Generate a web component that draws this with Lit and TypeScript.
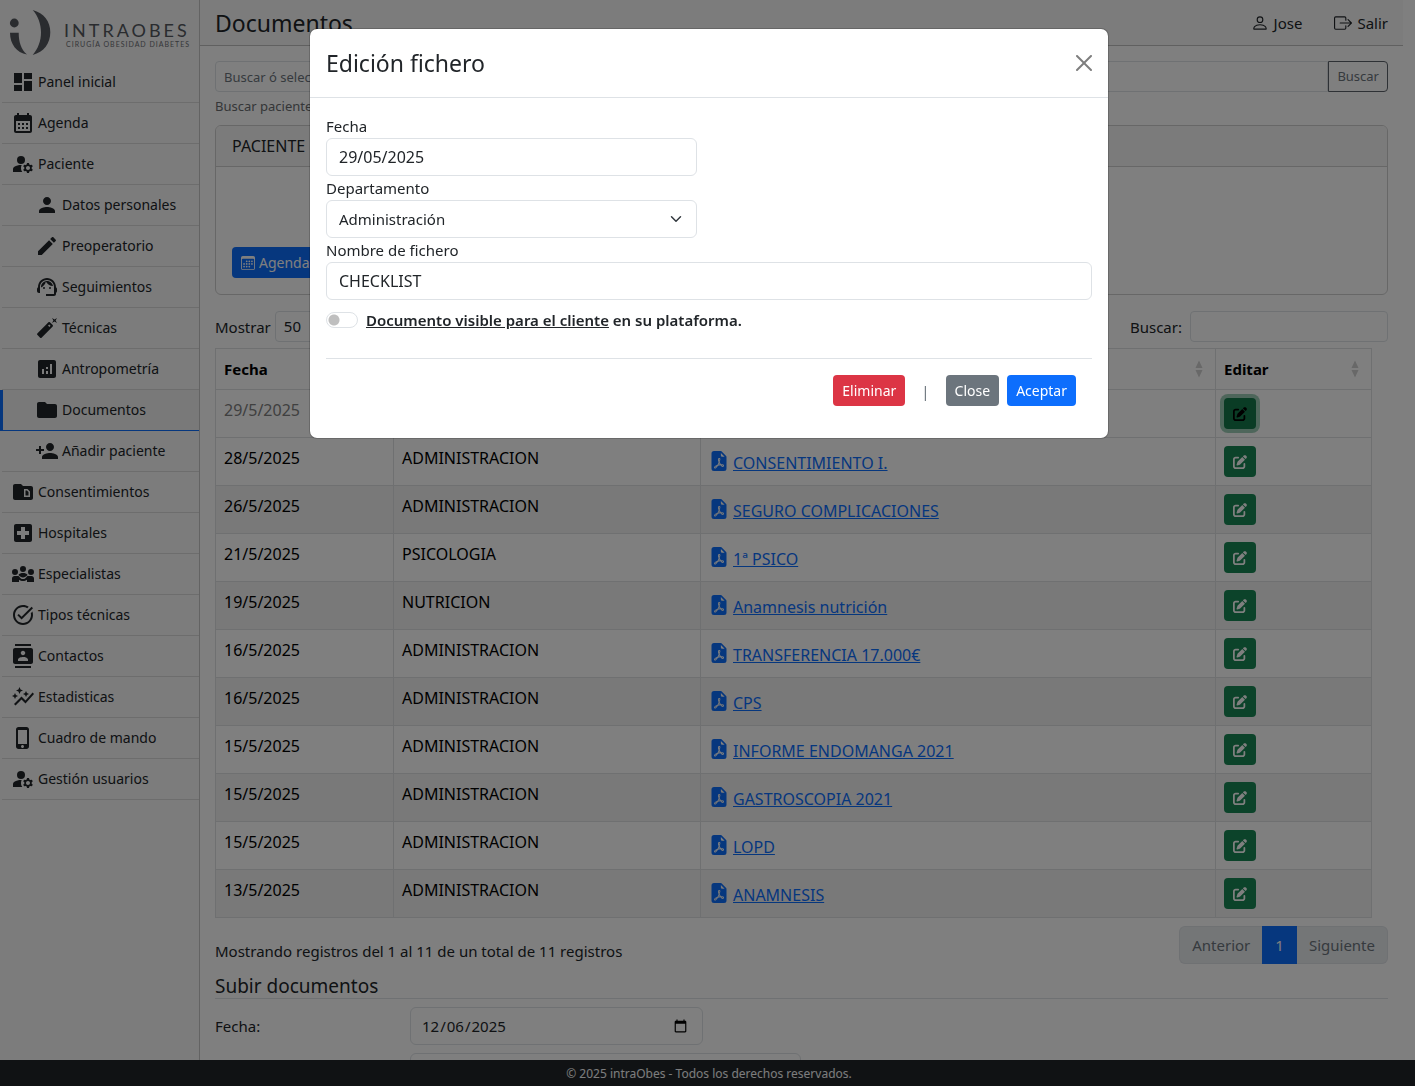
import { LitElement, html, css, svg, nothing } from "lit";
import { customElement } from "lit/decorators.js";
import { classMap } from "lit/directives/class-map.js";

const icons: Record<string, string[]> = {
  dashboard: ["M3 13h8V3H3v10zm0 8h8v-6H3v6zm10 0h8V11h-8v10zm0-18v6h8V3h-8z"],
  calendar: [
    "M19 4h-1V2h-2v2H8V2H6v2H5c-1.11 0-1.99.9-1.99 2L3 20c0 1.1.89 2 2 2h14c1.1 0 2-.9 2-2V6c0-1.1-.9-2-2-2zm0 16H5V10h14v10zM9 14H7v-2h2v2zm4 0h-2v-2h2v2zm4 0h-2v-2h2v2zm-8 4H7v-2h2v2zm4 0h-2v-2h2v2zm4 0h-2v-2h2v2z",
  ],
  manage: [
    "M14 8a4 4 0 1 1-8 0a4 4 0 0 1 8 0z",
    "M10.67 13.02C10.45 13.01 10.23 13 10 13c-2.42 0-4.68.67-6.61 1.82-.88.52-1.39 1.5-1.39 2.53V20h9.26c-.79-1.13-1.26-2.51-1.26-4 0-1.07.25-2.07.67-2.98zM20.75 16c0-.22-.03-.42-.06-.63l1.14-1.01-1-1.73-1.45.49c-.32-.27-.68-.48-1.08-.63L18 11h-2l-.3 1.49c-.4.15-.76.36-1.08.63l-1.45-.49-1 1.73 1.14 1.01c-.03.21-.06.41-.06.63s.03.42.06.63l-1.14 1.01 1 1.73 1.45-.49c.32.27.68.48 1.08.63L16 21h2l.3-1.49c.4-.15.76-.36 1.08-.63l1.45.49 1-1.73-1.14-1.01c.03-.21.06-.41.06-.63zM17 18c-1.1 0-2-.9-2-2s.9-2 2-2 2 .9 2 2-.9 2-2 2z",
  ],
  person: [
    "M12 12c2.21 0 4-1.79 4-4s-1.79-4-4-4-4 1.79-4 4 1.79 4 4 4zm0 2c-2.67 0-8 1.34-8 4v2h16v-2c0-2.66-5.33-4-8-4z",
  ],
  pencil: [
    "M3 17.25V21h3.75L17.81 9.94l-3.75-3.75L3 17.25zM20.71 7.04c.39-.39.39-1.02 0-1.41l-2.34-2.34c-.39-.39-1.02-.39-1.41 0l-1.83 1.83 3.75 3.75 1.83-1.83z",
  ],
  support: [
    "M21 12.22C21 6.73 16.74 3 12 3c-4.69 0-9 3.65-9 9.28-.6.34-1 .98-1 1.72v2c0 1.1.9 2 2 2h1v-6.1c0-3.87 3.13-7 7-7s7 3.13 7 7V19h-8v2h8c1.1 0 2-.9 2-2v-1.22c.59-.31 1-.92 1-1.64v-2.3c0-.7-.41-1.31-1-1.62z",
    "M10 13a1 1 0 1 1-2 0a1 1 0 0 1 2 0zM16 13a1 1 0 1 1-2 0a1 1 0 0 1 2 0z",
    "M18 11.03C17.52 8.18 15.04 6 12.05 6c-3.03 0-6.29 2.51-6.03 6.45 2.47-1.01 4.33-3.21 4.86-5.89 1.31 2.63 4 4.44 7.12 4.47z",
  ],
  wand: [
    "M22 2l-2.5 1.4L17 2l1.4 2.5L17 7l2.5-1.4L22 7l-1.4-2.5L22 2z",
    "M17.71 9.12l-2.83-2.83C14.68 6.1 14.43 6 14.17 6c-.26 0-.51.1-.71.29L2.29 17.46c-.39.39-.39 1.02 0 1.41l2.83 2.83c.2.2.46.3.71.3s.51-.1.71-.29l11.17-11.17c.39-.39.39-1.03 0-1.42zm-3.54-.7l1.41 1.41L14.41 11 13 9.59l1.17-1.17z",
  ],
  analytics: [
    "M19 3H5c-1.1 0-2 .9-2 2v14c0 1.1.9 2 2 2h14c1.1 0 2-.9 2-2V5c0-1.1-.9-2-2-2zM9 17H7v-5h2v5zm4 0h-2v-3h2v3zm0-5h-2v-2h2v2zm4 5h-2V7h2v10z",
  ],
  folder: [
    "M10 4H4c-1.1 0-1.99.9-1.99 2L2 18c0 1.1.9 2 2 2h16c1.1 0 2-.9 2-2V8c0-1.1-.9-2-2-2h-8l-2-2z",
  ],
  personAdd: [
    "M15 12c2.21 0 4-1.79 4-4s-1.79-4-4-4-4 1.79-4 4 1.79 4 4 4zm-9-2V7H4v3H1v2h3v3h2v-3h3v-2H6zm9 4c-2.67 0-8 1.34-8 4v2h16v-2c0-2.66-5.33-4-8-4z",
  ],
  snippetFolder: [
    "M15.88 10.5l1.62 1.62v3.38h-3v-5h1.38zM22 8v10c0 1.1-.9 2-2 2H4c-1.1 0-2-.9-2-2L2.01 6c0-1.1.89-2 1.99-2h6l2 2h8c1.1 0 2 .9 2 2zm-3 3.5L16.5 9H13v8h6v-5.5z",
  ],
  hospital: [
    "M19 3H5c-1.1 0-1.99.9-1.99 2L3 19c0 1.1.9 2 2 2h14c1.1 0 2-.9 2-2V5c0-1.1-.9-2-2-2zm-1 11h-4v4h-4v-4H6v-4h4V6h4v4h4v4z",
  ],
  groups: [
    "M15 7a3 3 0 1 1-6 0a3 3 0 0 1 6 0zM7 10a3 3 0 1 1-6 0a3 3 0 0 1 6 0zM23 10a3 3 0 1 1-6 0a3 3 0 0 1 6 0z",
    "M12 15.6c1.9 0 3-1.4 4.6-2.6C15.6 11.6 14 11 12 11s-3.6.6-4.6 2C9 14.2 10.1 15.6 12 15.6z",
    "M1 20v-3.5C1 15.1 2.1 14 3.5 14h3.2c1 0 1.5.6 2 1.2.9 1.2 2 1.9 3.3 1.9s2.4-.7 3.3-1.9c.5-.6 1-1.2 2-1.2h3.2c1.4 0 2.5 1.1 2.5 2.5V20h-7v-2.3c-1.1.9-2.5 1.4-4 1.4s-2.900-.5-4-1.4V20H1z",
  ],
  taskAlt: [
    "M22 5.18 10.59 16.6l-4.24-4.24 1.41-1.41 2.83 2.83 10-10L22 5.18zm-2.21 5.04c.13.57.21 1.17.21 1.78 0 4.42-3.58 8-8 8s-8-3.58-8-8 3.58-8 8-8c1.58 0 3.04.46 4.28 1.25l1.44-1.44C16.1 2.67 14.13 2 12 2 6.48 2 2 6.48 2 12s4.48 10 10 10 10-4.48 10-10c0-1.19-.22-2.33-.6-3.39l-1.61 1.61z",
  ],
  contacts: [
    "M20 0H4v2h16V0zM4 24h16v-2H4v2zM20 4H4c-1.1 0-2 .9-2 2v12c0 1.1.9 2 2 2h16c1.1 0 2-.9 2-2V6c0-1.1-.9-2-2-2zm-8 2.75c1.24 0 2.25 1.01 2.25 2.25s-1.01 2.25-2.25 2.25S9.75 10.24 9.75 9 10.76 6.75 12 6.75zM17 17H7v-1.5c0-1.67 3.33-2.5 5-2.5s5 .83 5 2.5V17z",
  ],
  autoGraph: [
    "M14.06 9.94L12 9l2.06-.94L15 6l.94 2.06L18 9l-2.06.94L15 12l-.94-2.06zM4 14l.94-2.06L7 11l-2.06-.94L4 8l-.94 2.06L1 11l2.06.94L4 14zm4.5-5l1.09-2.41L12 5.5 9.59 4.41 8.5 2 7.41 4.41 5 5.5l2.41 1.09L8.5 9zm-4 11.5l6-6.01 4 4L23 8.93l-1.41-1.41-7.09 7.97-4-4L3 19l1.5 1.5z",
  ],
  phone: [
    "M15.5 1h-8C6.12 1 5 2.12 5 3.5v17C5 21.88 6.12 23 7.5 23h8c1.38 0 2.5-1.12 2.5-2.5v-17C18 2.12 16.88 1 15.5 1zm-4 21c-.83 0-1.5-.67-1.5-1.5s.67-1.5 1.5-1.5 1.5.67 1.5 1.5-.67 1.5-1.5 1.5zm4.5-4H7V4h9v14z",
  ],
  user: [
    "M8 8a3 3 0 1 0 0-6 3 3 0 0 0 0 6m2-3a2 2 0 1 1-4 0 2 2 0 0 1 4 0m4 8c0 1-1 1-1 1H3s-1 0-1-1 1-4 6-4 6 3 6 4m-1-.004c-.001-.246-.154-.986-.832-1.664C11.516 10.68 10.289 10 8 10s-3.516.68-4.168 1.332c-.678.678-.83 1.418-.832 1.664z",
  ],
  exit: [
    "M10 12.5a.5.5 0 0 1-.5.5h-8a.5.5 0 0 1-.5-.5v-9a.5.5 0 0 1 .5-.5h8a.5.5 0 0 1 .5.5v2a.5.5 0 0 0 1 0v-2A1.5 1.5 0 0 0 9.5 2h-8A1.5 1.5 0 0 0 0 3.5v9A1.5 1.5 0 0 0 1.5 14h8a1.5 1.5 0 0 0 1.5-1.5v-2a.5.5 0 0 0-1 0z",
    "M15.854 8.354a.5.5 0 0 0 0-.708l-3-3a.5.5 0 0 0-.708.708L14.293 7.5H5.5a.5.5 0 0 0 0 1h8.793l-2.147 2.146a.5.5 0 0 0 .708.708z",
  ],
  calendar3: [
    "M14 0H2a2 2 0 0 0-2 2v12a2 2 0 0 0 2 2h12a2 2 0 0 0 2-2V2a2 2 0 0 0-2-2M1 3.857C1 3.384 1.448 3 2 3h12c.552 0 1 .384 1 .857v10.286c0 .473-.448.857-1 .857H2c-.552 0-1-.384-1-.857z",
    "M6.5 7a1 1 0 1 0 0-2 1 1 0 0 0 0 2m3 0a1 1 0 1 0 0-2 1 1 0 0 0 0 2m3 0a1 1 0 1 0 0-2 1 1 0 0 0 0 2m-9 3a1 1 0 1 0 0-2 1 1 0 0 0 0 2m3 0a1 1 0 1 0 0-2 1 1 0 0 0 0 2m3 0a1 1 0 1 0 0-2 1 1 0 0 0 0 2m3 0a1 1 0 1 0 0-2 1 1 0 0 0 0 2m-9 3a1 1 0 1 0 0-2 1 1 0 0 0 0 2m3 0a1 1 0 1 0 0-2 1 1 0 0 0 0 2m3 0a1 1 0 1 0 0-2 1 1 0 0 0 0 2",
  ],
  pdf: [
    "M5.523 12.424q.21-.124.459-.238a8 8 0 0 1-.45.606c-.28.337-.498.516-.635.572l-.035.012a.3.3 0 0 1-.026-.044c-.056-.11-.054-.216.04-.36.106-.165.319-.354.647-.548m2.455-1.647q-.178.037-.356.078a21 21 0 0 0 .5-1.05 12 12 0 0 0 .51.858q-.326.048-.654.114m2.525.939a4 4 0 0 1-.435-.41q.344.007.612.054c.317.057.466.147.518.209a.1.1 0 0 1 .026.064.44.44 0 0 1-.06.2.3.3 0 0 1-.094.124.1.1 0 0 1-.069.015c-.09-.003-.258-.066-.498-.256M8.278 6.97c-.04.244-.108.524-.2.829a5 5 0 0 1-.089-.346c-.076-.353-.087-.63-.046-.822.038-.177.11-.248.196-.283a.5.5 0 0 1 .145-.04c.013.03.028.092.032.198q.008.183-.038.465z",
    "M4 0h5.293A1 1 0 0 1 10 .293L13.707 4a1 1 0 0 1 .293.707V14a2 2 0 0 1-2 2H4a2 2 0 0 1-2-2V2a2 2 0 0 1 2-2m5.5 1.5v2a1 1 0 0 0 1 1h2zM4.165 13.668c.09.18.23.343.438.419.207.075.412.04.58-.03.318-.13.635-.436.926-.786.333-.401.683-.927 1.021-1.51a11.7 11.7 0 0 1 1.997-.406c.3.383.61.713.91.95.28.22.603.403.934.417a.86.86 0 0 0 .51-.138c.155-.101.27-.247.354-.416.09-.181.145-.37.138-.563a.84.84 0 0 0-.2-.518c-.226-.27-.596-.4-.96-.465a5.8 5.8 0 0 0-1.335-.05 11 11 0 0 1-.98-1.686c.25-.66.437-1.284.52-1.794.036-.218.055-.426.048-.614a1.24 1.24 0 0 0-.127-.538.7.7 0 0 0-.477-.365c-.202-.043-.41 0-.601.077-.377.15-.576.47-.651.823-.073.34-.04.736.046 1.136.088.406.238.848.43 1.295a20 20 0 0 1-1.062 2.227 7.7 7.7 0 0 0-1.482.645c-.37.22-.699.48-.897.787-.21.326-.275.714-.08 1.103",
  ],
  edit: [
    "M471.6 21.7c-21.9-21.9-57.3-21.9-79.2 0L362.3 51.7l97.9 97.9 30.1-30.1c21.9-21.9 21.9-57.3 0-79.2L471.6 21.7zm-299.2 220c-6.1 6.1-10.8 13.6-13.5 21.9l-29.6 88.8c-2.9 8.6-.6 18.1 5.8 24.6s15.9 8.7 24.6 5.8l88.8-29.6c8.2-2.7 15.7-7.4 21.9-13.5L437.7 172.3 339.7 74.3 172.4 241.7zM96 64C43 64 0 107 0 160V416c0 53 43 96 96 96H352c53 0 96-43 96-96V320c0-17.7-14.3-32-32-32s-32 14.3-32 32v96c0 17.7-14.3 32-32 32H96c-17.7 0-32-14.3-32-32V160c0-17.7 14.3-32 32-32h96c17.7 0 32-14.3 32-32s-14.3-32-32-32H96z",
  ],
  close: [
    "M.293.293a1 1 0 0 1 1.414 0L8 6.586 14.293.293a1 1 0 1 1 1.414 1.414L9.414 8l6.293 6.293a1 1 0 0 1-1.414 1.414L8 9.414l-6.293 6.293a1 1 0 0 1-1.414-1.414L6.586 8 .293 1.707a1 1 0 0 1 0-1.414z",
  ],
};

const icon = (name: string, size: number, box = 24) => html`<svg
  class="icon"
  width=${size}
  height=${size}
  viewBox="0 0 ${box} ${box}"
  fill="currentColor"
  aria-hidden="true"
>
  ${icons[name].map((d) => svg`<path d=${d}></path>`)}
</svg>`;

interface MenuItem {
  icon: string;
  label: string;
  sub?: boolean;
  active?: boolean;
}

const menu: MenuItem[] = [
  { icon: "dashboard", label: "Panel inicial" },
  { icon: "calendar", label: "Agenda" },
  { icon: "manage", label: "Paciente" },
  { icon: "person", label: "Datos personales", sub: true },
  { icon: "pencil", label: "Preoperatorio", sub: true },
  { icon: "support", label: "Seguimientos", sub: true },
  { icon: "wand", label: "Técnicas", sub: true },
  { icon: "analytics", label: "Antropometría", sub: true },
  { icon: "folder", label: "Documentos", sub: true, active: true },
  { icon: "personAdd", label: "Añadir paciente", sub: true },
  { icon: "snippetFolder", label: "Consentimientos" },
  { icon: "hospital", label: "Hospitales" },
  { icon: "groups", label: "Especialistas" },
  { icon: "taskAlt", label: "Tipos técnicas" },
  { icon: "contacts", label: "Contactos" },
  { icon: "autoGraph", label: "Estadisticas" },
  { icon: "phone", label: "Cuadro de mando" },
  { icon: "manage", label: "Gestión usuarios" },
];

interface Doc {
  date: string;
  dept: string;
  name: string;
  editing?: boolean;
}

const docs: Doc[] = [
  { date: "29/5/2025", dept: "ADMINISTRACION", name: "CHECKLIST", editing: true },
  { date: "28/5/2025", dept: "ADMINISTRACION", name: "CONSENTIMIENTO I." },
  { date: "26/5/2025", dept: "ADMINISTRACION", name: "SEGURO COMPLICACIONES" },
  { date: "21/5/2025", dept: "PSICOLOGIA", name: "1ª PSICO" },
  { date: "19/5/2025", dept: "NUTRICION", name: "Anamnesis nutrición" },
  { date: "16/5/2025", dept: "ADMINISTRACION", name: "TRANSFERENCIA 17.000€" },
  { date: "16/5/2025", dept: "ADMINISTRACION", name: "CPS" },
  { date: "15/5/2025", dept: "ADMINISTRACION", name: "INFORME ENDOMANGA 2021" },
  { date: "15/5/2025", dept: "ADMINISTRACION", name: "GASTROSCOPIA 2021" },
  { date: "15/5/2025", dept: "ADMINISTRACION", name: "LOPD" },
  { date: "13/5/2025", dept: "ADMINISTRACION", name: "ANAMNESIS" },
];

const base = css`
  *,
  *::before,
  *::after {
    box-sizing: border-box;
  }
  :host {
    box-sizing: border-box;
    display: block;
  }
  .icon {
    display: block;
    flex: none;
  }
  a {
    color: inherit;
    text-decoration: none;
  }
  h1,
  h2 {
    margin: 0;
    font-weight: 400;
  }
  button,
  input,
  select {
    font: inherit;
    color: inherit;
    margin: 0;
  }
  .control {
    display: block;
    width: 100%;
    height: 38px;
    padding: 0 12px;
    border: 1px solid #dee2e6;
    border-radius: 6px;
    background-color: #fff;
    font-size: 16px;
    line-height: 24px;
  }
  .control.small {
    height: 31px;
    padding: 0 8px;
    border-radius: 4px;
    font-size: 13px;
    line-height: 21px;
  }
  .control::placeholder {
    color: #6c757d;
    opacity: 1;
  }
  select.control {
    appearance: none;
    background-image: url("data:image/svg+xml,%3Csvg xmlns='http://www.w3.org/2000/svg' viewBox='0 0 16 16'%3E%3Cpath fill='none' stroke='%23343a40' stroke-linecap='round' stroke-linejoin='round' stroke-width='2' d='m2 5 6 6 6-6'/%3E%3C/svg%3E");
    background-repeat: no-repeat;
    background-position: right 14px center;
    background-size: 12px 12px;
    font-size: 15px;
  }
  .btn {
    display: inline-flex;
    align-items: center;
    gap: 4px;
    height: 31px;
    padding: 0 8px;
    border: 1px solid transparent;
    border-radius: 4px;
    font-size: 14px;
    line-height: 21px;
    color: #fff;
    cursor: pointer;
  }
  .primary {
    background: #0d6efd;
  }
  .danger {
    background: #dc3545;
  }
  .secondary {
    background: #6c757d;
  }
  .success {
    background: #198754;
  }
`;

@customElement("side-menu")
class SideMenu extends LitElement {
  static styles = [
    base,
    css`
      :host {
        background: #f8f8f8;
        border-right: 1px solid #c6c6c6;
      }
      .brand {
        display: flex;
        height: 62px;
        padding: 8px 0 0 8px;
      }
      .item {
        display: flex;
        align-items: center;
        gap: 3px;
        height: 41px;
        margin-left: 2px;
        padding-left: 9px;
        border-bottom: 1px solid #dadada;
        font-size: 14px;
        line-height: 20px;
      }
      .sub {
        padding-left: 33px;
      }
      .active {
        margin-left: 0;
        padding-left: 32px;
        border-left: 3px solid #0d6efd;
        border-bottom-color: #0d6efd;
        background: #f2f2f2;
      }
      .mark {
        fill: #55585f;
      }
      .name {
        font: 18px Lato, sans-serif;
        letter-spacing: 3px;
        fill: #55585f;
      }
      .tagline {
        font: 7px Lato, sans-serif;
        letter-spacing: 1px;
        fill: #6c6e74;
      }
    `,
  ];

  render() {
    return html`
      <a class="brand" href="#inicio" aria-label="Intraobes">
        <svg width="184" height="50" viewBox="8 8 184 50">
          <circle class="mark" cx="14.3" cy="23" r="4.4"></circle>
          <path class="mark" d="M10 32.7h8.7C18.7 42 21 49 27 54.5 16.5 52.5 10 44 10 32.7z"></path>
          <path
            class="mark"
            d="M32.7 10C44 13 50.3 21.5 50.3 32.3 50.3 43.5 44 52 32.7 55 38 49 41 41 41 32.3 41 24 38 16 32.7 10z"
          ></path>
          <text class="name" x="64" y="37">INTRAOBES</text>
          <text class="tagline" x="66" y="47">CIRUGÍA OBESIDAD DIABETES</text>
        </svg>
      </a>
      <nav>
        ${menu.map(
          (m) => html`<a
            href="#menu"
            aria-current=${m.active ? "page" : nothing}
            class=${classMap({ item: true, sub: !!m.sub, active: !!m.active })}
            >${icon(m.icon, 24)}<span>${m.label}</span></a
          >`
        )}
      </nav>
    `;
  }
}

@customElement("documents-page")
class DocumentsPage extends LitElement {
  static styles = [
    base,
    css`
      :host {
        min-width: 0;
      }
      .topbar {
        display: flex;
        justify-content: space-between;
        align-items: center;
        height: 46px;
        padding: 0 15px;
        background: #f8f8f8;
        border-bottom: 1px solid #c0c0c0;
      }
      .topbar h1 {
        font-size: 23px;
        line-height: 28px;
      }
      .session {
        display: flex;
        gap: 32px;
      }
      .session a {
        display: flex;
        gap: 5px;
        align-items: center;
      }
      .content {
        padding: 15px;
      }
      .search {
        display: flex;
      }
      .search .control {
        flex: 1;
        border-radius: 4px 0 0 4px;
      }
      .outline {
        background: transparent;
        border-color: #5c636a;
        border-radius: 0 4px 4px 0;
        color: #6c757d;
        font-size: 13px;
      }
      .help {
        display: block;
        margin-top: 4px;
        font-size: 13px;
        line-height: 21px;
        color: #6a6d70;
      }
      .card {
        margin-top: 8px;
        border: 1px solid #cfcfcf;
        border-radius: 6px;
        overflow: hidden;
      }
      .card-head {
        padding: 8px 16px;
        background: #f7f7f7;
        border-bottom: 1px solid #cfcfcf;
        font-size: 16px;
      }
      .card-body {
        display: flex;
        align-items: flex-end;
        height: 127px;
        padding: 16px;
      }
      .tools {
        display: flex;
        justify-content: space-between;
        margin: 16px 0 6px;
      }
      .tools label {
        display: flex;
        align-items: center;
        gap: 8px;
      }
      .tools .length {
        gap: 4px;
      }
      .tools .length .control {
        width: 72px;
        font-size: 15px;
      }
      .tools .filter .control {
        width: 198px;
      }
      .grid {
        width: calc(100% - 16px);
        table-layout: fixed;
        border-collapse: collapse;
        color: #000;
      }
      .c-date {
        width: 178px;
      }
      .c-dept {
        width: 307px;
      }
      .c-edit {
        width: 156px;
      }
      th,
      td {
        border: 1px solid #dee0e2;
        vertical-align: top;
        text-align: left;
        padding: 8px;
      }
      th {
        font-weight: 700;
      }
      td {
        font-size: 16px;
      }
      .head {
        display: flex;
        justify-content: space-between;
        align-items: center;
        padding-right: 4px;
      }
      .sort {
        fill: #d0d0d0;
      }
      tbody tr:nth-child(odd) {
        background: #f2f2f2;
      }
      tbody tr.editing {
        background: #fff;
        color: #808080;
      }
      .file {
        display: flex;
        gap: 4px;
        padding-top: 5px;
        color: #0d6efd;
      }
      .file a {
        text-decoration: underline;
      }
      .btn.pressed {
        background: #14784a;
        box-shadow: 0 0 0 4px rgba(60, 153, 110, 0.5);
        color: #000;
      }
      .summary {
        display: flex;
        justify-content: space-between;
        margin-top: 8px;
      }
      .info {
        padding-top: 13px;
      }
      .pages {
        display: flex;
      }
      .page {
        height: 38px;
        padding: 0 12px;
        border: 1px solid #dee2e6;
        background: #e9ecef;
        color: #6c757d;
      }
      .page:first-child {
        border-right: 0;
        border-radius: 6px 0 0 6px;
      }
      .page:last-child {
        border-left: 0;
        border-radius: 0 6px 6px 0;
      }
      .page.current {
        background: #0d6efd;
        border-color: #0d6efd;
        color: #fff;
      }
      .section {
        margin-top: 11px;
        font-size: 19px;
        line-height: 23px;
        border-bottom: 1px solid #dee2e6;
      }
      .upload {
        display: grid;
        grid-template-columns: 195px minmax(0, 1fr);
        align-items: center;
        gap: 8px 0;
        margin-top: 8px;
      }
      .upload .date {
        width: 30%;
        padding-left: 10px;
        font-size: 15px;
      }
      .upload .kind {
        width: 40%;
        grid-column: 2;
      }
    `,
  ];

  private heading(label: string) {
    return html`<div class="head">
      <span>${label}</span>
      <svg class="sort" width="8" height="18" viewBox="0 0 8 18" aria-hidden="true">
        <path d="M4 0.5 7.5 8h-7zM4 17.5 7.5 10h-7z"></path>
      </svg>
    </div>`;
  }

  render() {
    return html`
      <header class="topbar">
        <h1>Documentos</h1>
        <div class="session">
          <a href="#perfil">${icon("user", 18, 16)}<span>Jose</span></a>
          <a href="#salir">${icon("exit", 18, 16)}<span>Salir</span></a>
        </div>
      </header>
      <main class="content">
        <div class="search">
          <input
            class="control small"
            id="patient"
            aria-label="Buscar paciente"
            placeholder="Buscar ó seleccionar"
          />
          <button class="btn outline">Buscar</button>
        </div>
        <label class="help" for="patient">Buscar paciente</label>
        <section class="card">
          <div class="card-head">PACIENTE</div>
          <div class="card-body">
            <button class="btn primary">${icon("calendar3", 14, 16)}Agenda</button>
          </div>
        </section>
        <div class="tools">
          <label class="length"
            >Mostrar
            <select class="control small">
              <option>50</option>
            </select>
          </label>
          <label class="filter">Buscar: <input class="control small" type="search" /></label>
        </div>
        <table class="grid">
          <colgroup>
            <col class="c-date" />
            <col class="c-dept" />
            <col />
            <col class="c-edit" />
          </colgroup>
          <thead>
            <tr>
              <th>${this.heading("Fecha")}</th>
              <th>${this.heading("Departamento")}</th>
              <th>${this.heading("Fichero")}</th>
              <th>${this.heading("Editar")}</th>
            </tr>
          </thead>
          <tbody>
            ${docs.map(
              (d) => html`<tr class=${classMap({ editing: !!d.editing })}>
                <td>${d.date}</td>
                <td>${d.dept}</td>
                <td>
                  <div class="file">${icon("pdf", 20, 16)}<a href="#fichero">${d.name}</a></div>
                </td>
                <td>
                  <button
                    class=${classMap({ btn: true, success: true, pressed: !!d.editing })}
                    aria-label="Editar"
                  >
                    ${icon("edit", 14, 512)}
                  </button>
                </td>
              </tr>`
            )}
          </tbody>
        </table>
        <div class="summary">
          <div class="info">Mostrando registros del 1 al 11 de un total de 11 registros</div>
          <div class="pages">
            <button class="page">Anterior</button>
            <button class="page current">1</button>
            <button class="page">Siguiente</button>
          </div>
        </div>
        <h2 class="section">Subir documentos</h2>
        <form class="upload">
          <label for="upload-date">Fecha:</label>
          <input class="control date" id="upload-date" type="date" value="2025-12-06" />
          <select class="control kind" aria-label="Departamento"></select>
        </form>
      </main>
    `;
  }
}

@customElement("edit-dialog")
class EditDialog extends LitElement {
  static styles = [
    base,
    css`
      :host {
        width: 800px;
        max-width: 100%;
        border: 1px solid rgba(0, 0, 0, 0.175);
        border-radius: 8px;
        background: #fff;
        background-clip: padding-box;
      }
      .head {
        display: flex;
        justify-content: space-between;
        align-items: center;
        padding: 16px;
        border-bottom: 1px solid #dee2e6;
      }
      .head h2 {
        font-size: 23px;
        line-height: 36px;
      }
      .x {
        padding: 0;
        border: 0;
        background: none;
        opacity: 0.5;
        color: #000;
        cursor: pointer;
      }
      .body {
        padding: 16px;
      }
      .fields {
        display: grid;
        grid-template-columns: 1fr 1fr;
        column-gap: 24px;
      }
      .fields > * {
        grid-column: 1;
      }
      .fields .wide {
        grid-column: 1 / 3;
      }
      .visible {
        display: flex;
        align-items: center;
        gap: 8px;
        margin-top: 8px;
        font-weight: 600;
      }
      .switch {
        appearance: none;
        width: 32px;
        height: 16px;
        border: 1px solid #dee2e6;
        border-radius: 16px;
        background: radial-gradient(circle 6px at 7px 50%, #bfbfbf 5px, transparent 6px) #fff;
      }
      .foot {
        display: flex;
        justify-content: flex-end;
        align-items: center;
        gap: 8px;
        margin-top: 26px;
        padding: 16px;
        border-top: 1px solid #dee2e6;
      }
      .bar {
        padding: 0 8px;
        color: #6c757d;
      }
    `,
  ];

  render() {
    return html`
      <div class="head">
        <h2>Edición fichero</h2>
        <button class="x" aria-label="Cerrar">${icon("close", 16, 16)}</button>
      </div>
      <div class="body">
        <div class="fields">
          <label for="date">Fecha</label>
          <input class="control" id="date" value="29/05/2025" />
          <label for="dept">Departamento</label>
          <select class="control" id="dept">
            <option>Administración</option>
          </select>
          <label for="name">Nombre de fichero</label>
          <input class="control wide" id="name" value="CHECKLIST" />
        </div>
        <div class="visible">
          <input class="switch" type="checkbox" role="switch" id="visible" />
          <label for="visible"><u>Documento visible para el cliente</u> en su plataforma.</label>
        </div>
        <div class="foot">
          <button class="btn danger">Eliminar</button>
          <span class="bar">|</span>
          <button class="btn secondary">Close</button>
          <button class="btn primary">Aceptar</button>
        </div>
      </div>
    `;
  }
}

@customElement("app-root")
class AppRoot extends LitElement {
  static styles = css`
    :host {
      display: flex;
      flex-direction: column;
      height: 100vh;
      overflow: hidden;
      background: #fff;
      color: #212529;
      font: 15px/24px "Noto Sans", sans-serif;
    }
    .shell {
      flex: 1;
      min-height: 0;
      display: grid;
      grid-template-columns: 200px minmax(0, 1fr);
      padding-right: 12px;
      overflow: hidden;
    }
    .footer {
      padding: 3px 0 1px 3px;
      background: #212529;
      color: #f8f9fa;
      text-align: center;
      font-size: 12px;
      line-height: 22px;
    }
    .backdrop {
      position: fixed;
      inset: 0;
      display: flex;
      justify-content: center;
      align-items: flex-start;
      padding: 28px 0 0 3px;
      background: rgba(0, 0, 0, 0.5);
    }
  `;

  render() {
    return html`
      <div class="shell">
        <side-menu></side-menu>
        <documents-page></documents-page>
      </div>
      <footer class="footer">© 2025 intraObes - Todos los derechos reservados.</footer>
      <div class="backdrop">
        <edit-dialog role="dialog" aria-modal="true" aria-label="Edición fichero"></edit-dialog>
      </div>
    `;
  }
}
